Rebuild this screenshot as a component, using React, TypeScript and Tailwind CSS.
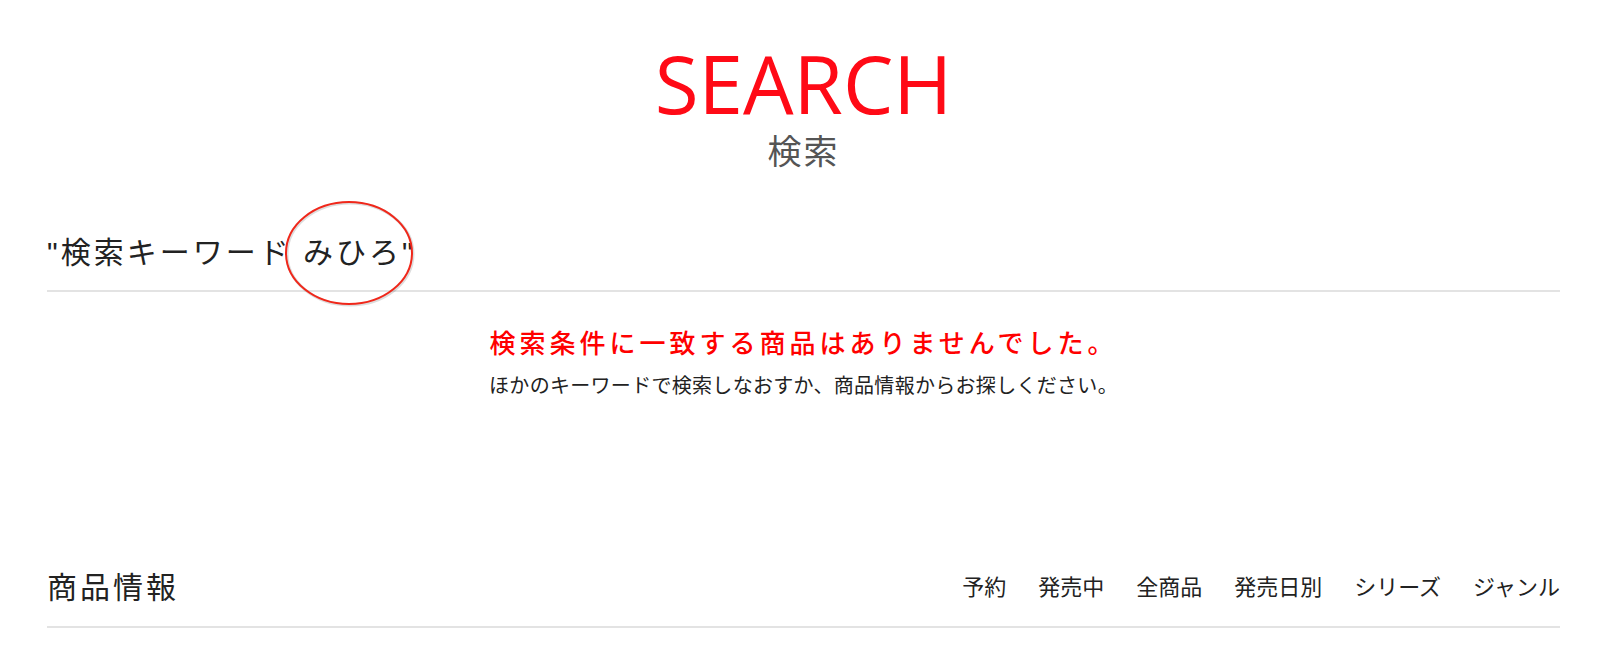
const jp = { fontFamily: '"Liberation Sans", "Noto Sans CJK JP", sans-serif' };

const navItems = ["予約", "発売中", "全商品", "発売日別", "シリーズ", "ジャンル"];

export default function App() {
  return (
    <div className="min-h-screen bg-white text-[#222]" style={jp}>
      <div className="ml-[47px] mr-[40px]">
        <div className="flex flex-col items-center pt-[43px]">
          <h1
            className="text-[80px] leading-none text-[#ff0a16]"
            style={{ fontFamily: '"Open Sans", "Liberation Sans", sans-serif' }}
          >
            SEARCH
          </h1>
          <p className="mt-[12px] text-[34px] leading-none tracking-[2px] text-[#555]">検索</p>
        </div>

        <div className="mt-[69px] pb-[22px] border-b-2 border-[#e3e3e3]">
          <h2 className="text-[30px] leading-none tracking-[3px]">
            "検索キーワード{" "}
            <span className="relative">
              みひろ
              <svg
                className="absolute pointer-events-none"
                style={{ left: -20, top: -37 }}
                width="132"
                height="108"
                viewBox="0 0 132 108"
              >
                <ellipse cx="66" cy="54" rx="63" ry="51" fill="none" stroke="#00000022" strokeWidth="3" transform="translate(1 1)" />
                <ellipse cx="66" cy="54" rx="63" ry="51" fill="none" stroke="#f0271a" strokeWidth="2" />
              </svg>
            </span>
            "
          </h2>
        </div>

        <div className="flex flex-col items-center">
          <p className="mt-[39px] text-[26px] leading-none tracking-[4px] text-[#ff0000] font-medium">
            検索条件に一致する商品はありませんでした。
          </p>
          <p className="mt-[19px] text-[20px] leading-none tracking-[0.3px]">
            ほかのキーワードで検索しなおすか、商品情報からお探しください。
          </p>
        </div>

        <div className="mt-[177px] pb-[23px] border-b-2 border-[#e3e3e3] flex items-center justify-between">
          <h2 className="text-[30px] leading-none tracking-[3px]">商品情報</h2>
          <nav className="flex gap-[32px] text-[22px] leading-none">
            {navItems.map((item) => (
              <a key={item} href="#" className="text-[#222]">
                {item}
              </a>
            ))}
          </nav>
        </div>
      </div>
    </div>
  );
}
